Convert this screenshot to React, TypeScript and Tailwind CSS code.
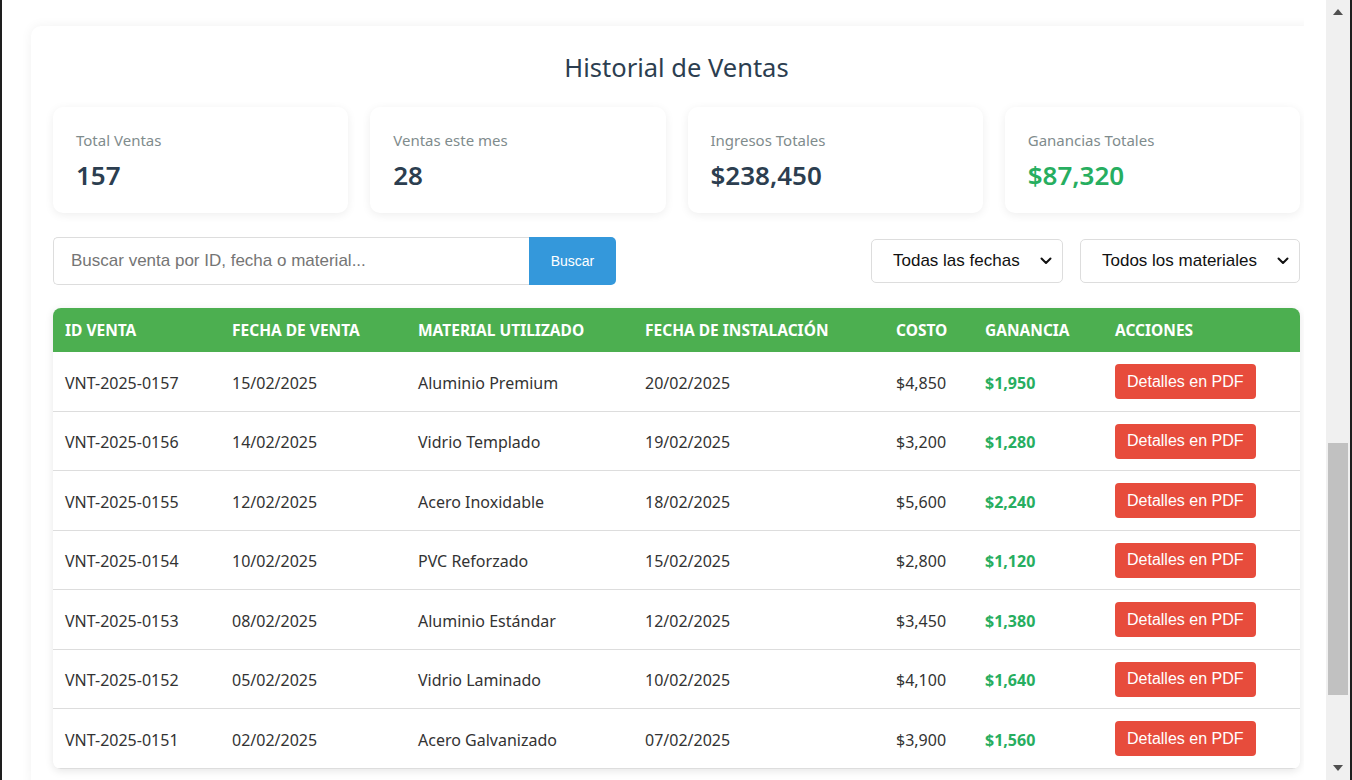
import React from "react";

const stats = [
    { label: "Total Ventas", value: "157", green: false },
    { label: "Ventas este mes", value: "28", green: false },
    { label: "Ingresos Totales", value: "$238,450", green: false },
    { label: "Ganancias Totales", value: "$87,320", green: true },
];

const sales = [
    { id: "VNT-2025-0157", date: "15/02/2025", material: "Aluminio Premium", install: "20/02/2025", cost: "$4,850", profit: "$1,950" },
    { id: "VNT-2025-0156", date: "14/02/2025", material: "Vidrio Templado", install: "19/02/2025", cost: "$3,200", profit: "$1,280" },
    { id: "VNT-2025-0155", date: "12/02/2025", material: "Acero Inoxidable", install: "18/02/2025", cost: "$5,600", profit: "$2,240" },
    { id: "VNT-2025-0154", date: "10/02/2025", material: "PVC Reforzado", install: "15/02/2025", cost: "$2,800", profit: "$1,120" },
    { id: "VNT-2025-0153", date: "08/02/2025", material: "Aluminio Estándar", install: "12/02/2025", cost: "$3,450", profit: "$1,380" },
    { id: "VNT-2025-0152", date: "05/02/2025", material: "Vidrio Laminado", install: "10/02/2025", cost: "$4,100", profit: "$1,640" },
    { id: "VNT-2025-0151", date: "02/02/2025", material: "Acero Galvanizado", install: "07/02/2025", cost: "$3,900", profit: "$1,560" },
];

const Chevron = () => (
    <svg width="12" height="8" viewBox="0 0 12 8" fill="none">
        <path d="M1.5 1.5 L6 6 L10.5 1.5" stroke="#111" strokeWidth="2" strokeLinecap="round" strokeLinejoin="round" />
    </svg>
);

const FilterSelect = ({ text, width }: { text: string; width: string }) => (
    <div className={`flex h-[44px] items-center justify-between rounded-[5px] border border-[#ddd] bg-white pl-[21px] pr-[10px] font-['Liberation_Sans',Arial,sans-serif] text-[17px] text-[#111] ${width}`}>
        <span>{text}</span>
        <Chevron />
    </div>
);

export default function App() {
    return (
        <div className="flex h-[780px] w-[1352px] overflow-hidden bg-white font-['Noto_Sans',sans-serif]">
            <div className="w-[2px] shrink-0 bg-[#1e1e1e]" />
            <div className="w-[1302px] shrink-0 overflow-hidden">
                <div className="ml-[29px] mt-[26px] w-[1291px] rounded-[10px] bg-white px-[22px] pb-[20px] pt-[19px] shadow-[0_0_12px_rgba(0,0,0,0.06)]">
                    <h1 className="text-center text-[25.5px] leading-[44px] text-[#2c3e50]">Historial de Ventas</h1>

                    <div className="mt-[18px] grid grid-cols-4 gap-[22px]">
                        {stats.map((s) => (
                            <div key={s.label} className="h-[106px] rounded-[10px] bg-white px-[23px] pt-[23px] shadow-[0_2px_10px_rgba(0,0,0,0.07)]">
                                <p className="text-[15px] leading-[20px] text-[#7f8c8d]">{s.label}</p>
                                <p className={`mt-[9px] text-[26px] font-semibold leading-[32px] ${s.green ? "text-[#27ae60]" : "text-[#2c3e50]"}`}>{s.value}</p>
                            </div>
                        ))}
                    </div>

                    <div className="mt-[24px] flex items-center">
                        <div className="flex h-[48px] w-[476px] items-center rounded-l-[5px] border border-r-0 border-[#ddd] pl-[17px] font-['Liberation_Sans',Arial,sans-serif] text-[17px] text-[#757575]">
                            Buscar venta por ID, fecha o material...
                        </div>
                        <button className="h-[48px] w-[87px] rounded-r-[5px] bg-[#3498db] font-['Liberation_Sans',Arial,sans-serif] text-[14px] text-white">Buscar</button>
                        <div className="flex-1" />
                        <div className="flex gap-[17px]">
                            <FilterSelect text="Todas las fechas" width="w-[192px]" />
                            <FilterSelect text="Todos los materiales" width="w-[220px]" />
                        </div>
                    </div>

                    <div className="mt-[23px] overflow-hidden rounded-[8px] bg-white shadow-[0_2px_8px_rgba(0,0,0,0.1)]">
                        <div className="grid h-[44px] grid-cols-[167px_186px_227px_251px_89px_130px_197px] items-center bg-[#4caf50] pt-[1px] text-[15.5px] font-bold uppercase text-white">
                            <div className="pl-[12px]">ID Venta</div>
                            <div className="pl-[12px]">Fecha de Venta</div>
                            <div className="pl-[12px]">Material Utilizado</div>
                            <div className="pl-[12px]">Fecha de Instalación</div>
                            <div className="pl-[12px]">Costo</div>
                            <div className="pl-[12px]">Ganancia</div>
                            <div className="pl-[12px]">Acciones</div>
                        </div>
                        {sales.map((r) => (
                            <div key={r.id} className="grid h-[59.5px] grid-cols-[167px_186px_227px_251px_89px_130px_197px] items-center border-b border-[#ddd] text-[16px] text-[#333]">
                                <div className="pl-[12px] pt-[3px]">{r.id}</div>
                                <div className="pl-[12px] pt-[3px]">{r.date}</div>
                                <div className="pl-[12px] pt-[3px]">{r.material}</div>
                                <div className="pl-[12px] pt-[3px]">{r.install}</div>
                                <div className="pl-[12px] pt-[3px]">{r.cost}</div>
                                <div className="pl-[12px] pt-[3px] font-bold text-[#27ae60]">{r.profit}</div>
                                <div className="pl-[12px] pt-[1px]">
                                    <button className="h-[35px] rounded-[4px] bg-[#e74c3c] px-[12px] font-['Liberation_Sans',Arial,sans-serif] text-[16px] text-white">Detalles en PDF</button>
                                </div>
                            </div>
                        ))}
                    </div>
                </div>
            </div>
            <div className="w-[22px] shrink-0 bg-white" />
            <div className="flex w-[24px] shrink-0 flex-col items-center bg-[#f0f0f0]">
                <div className="flex h-[24px] items-center justify-center">
                    <svg width="10" height="6" viewBox="0 0 10 6"><path d="M0 6 L5 0 L10 6 Z" fill="#505050" /></svg>
                </div>
                <div className="flex-1 w-full px-[2px]">
                    <div className="mt-[419px] h-[252px] w-full bg-[#c1c1c1]" />
                </div>
                <div className="flex h-[24px] items-center justify-center">
                    <svg width="10" height="6" viewBox="0 0 10 6"><path d="M0 0 L5 6 L10 0 Z" fill="#505050" /></svg>
                </div>
            </div>
            <div className="w-[2px] shrink-0 bg-[#1e1e1e]" />
        </div>
    );
}
